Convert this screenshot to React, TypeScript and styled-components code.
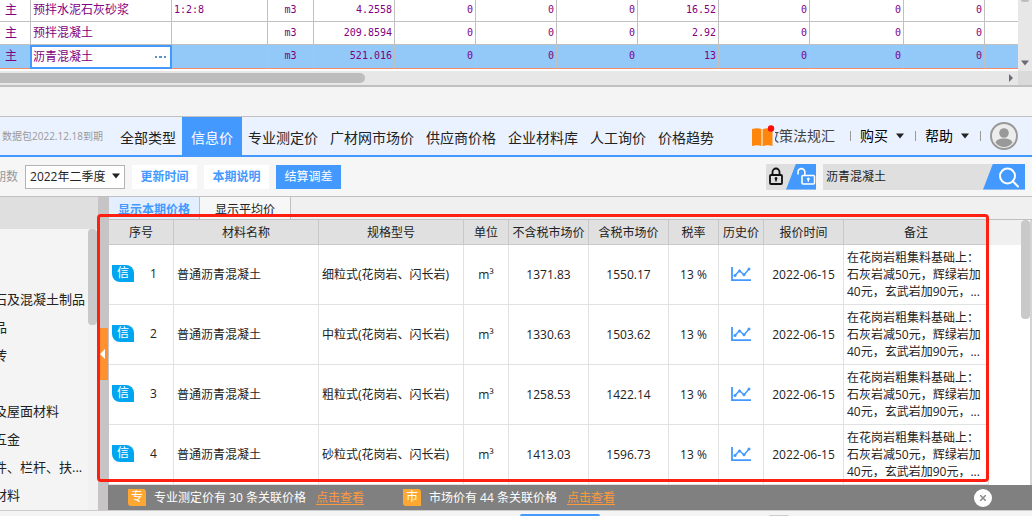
import React, { useState } from "react";
import styled, { createGlobalStyle } from "styled-components";

const SANS = '"Open Sans", "Noto Sans CJK SC", sans-serif';
const MONO = '"DejaVu Sans Mono", "Noto Sans CJK SC", monospace';
const BLUE = "#4499ff";
const LINE = "#c0c0c0";

const GlobalStyle = createGlobalStyle`
  * { box-sizing: border-box; }
  body { margin: 0; background: #f4f4f4; font-family: ${SANS}; font-size: 12px; line-height: 16px; color: #222; overflow: hidden; }
  button, input, select { font: inherit; color: inherit; margin: 0; padding: 0; border: 0; background: none; border-radius: 0; outline: none; }
  button { cursor: pointer; white-space: nowrap; }
  svg { display: block; flex: none; }
`;

const Page = styled.main`
  display: flex;
  flex-direction: column;
`;

/* ---------- upper resource grid ---------- */

const GridArea = styled.section`
  display: flex;
  height: 71px;
  background: #fff;
`;

const GridBody = styled.div`
  flex: 1;
  min-width: 0;
`;

const Grid = styled.table`
  width: 100%;
  table-layout: fixed;
  border-collapse: separate;
  border-spacing: 0;
  color: purple;
`;

const GridRow = styled.tr<{ $selected?: boolean }>`
  height: ${(p) => (p.$selected ? 24 : 23)}px;
  background: ${(p) => (p.$selected ? "#92c9f9" : "#fff")};
  &:first-child { height: 22px; }
  td { border-bottom: 1px solid ${(p) => (p.$selected ? "#f58b68" : LINE)}; }
`;

const GridCell = styled.td<{ $align?: string; $mono?: boolean }>`
  padding: 0 2px 1px;
  border-right: 1px solid ${LINE};
  text-align: ${(p) => p.$align || "left"};
  font-family: ${(p) => (p.$mono ? MONO : SANS)};
  font-size: ${(p) => (p.$mono ? 10 : 12)}px;
  line-height: 16px;
  white-space: nowrap;
`;

const EditCell = styled.td`
  padding: 0;
`;

const Editor = styled.div`
  display: flex;
  align-items: center;
  height: 24px;
  margin: -1px 0 -1px -1px;
  border: 2px solid ${BLUE};
  background: #fff;
  position: relative;
  input { flex: 1; min-width: 0; padding: 0 0 2px 1px; height: 18px; }
  button { padding-right: 4px; }
`;

const VScroll = styled.div`
  width: 14px;
  background: #e7e7e7;
  display: flex;
  flex-direction: column;
  justify-content: space-between;
  align-items: center;
  padding-bottom: 5px;
`;

const VScrollEnd = styled.div`
  width: 8px;
  height: 2px;
  background: #bdbdbd;
  border-radius: 0 0 4px 4px;
`;

const HScroll = styled.div`
  display: flex;
  height: 16px;
  border-bottom: 2px solid ${LINE};
  background: #e7e7e7;
`;

const HTrack = styled.div`
  flex: 1;
  display: flex;
  align-items: center;
  justify-content: space-between;
  padding-right: 5px;
`;

const HThumb = styled.div`
  width: 36%;
  height: 10px;
  background: #bdbdbd;
  border-radius: 0 5px 5px 0;
`;

const Corner = styled.div`
  width: 14px;
  background: #dadada;
`;

const Spacer = styled.div`
  height: 30px;
  border-bottom: 1px solid ${LINE};
`;

/* ---------- category navigation ---------- */

const NavBar = styled.header`
  display: flex;
  align-items: center;
  height: 40px;
  padding: 0 14px 0 2px;
  background: #ebf2ff;
  border-bottom: 2px solid ${BLUE};
`;

const PackInfo = styled.span`
  width: 112px;
  color: #999;
  font-size: 10px;
  white-space: nowrap;
`;

const Tabs = styled.nav`
  display: flex;
  height: 38px;
`;

const NavTab = styled.button<{ $active?: boolean }>`
  padding: 4px ${(p) => (p.$active ? 9 : 6)}px 0;
  font-size: 14px;
  line-height: 20px;
  color: ${(p) => (p.$active ? "#fff" : "#222")};
  background: ${(p) => (p.$active ? BLUE : "transparent")};
`;

const NavRight = styled.div`
  display: flex;
  align-items: center;
  margin-left: auto;
  font-size: 14px;
  line-height: 20px;
`;

const PolicyLink = styled.a`
  display: flex;
  align-items: center;
  margin-right: 15px;
  color: #444;
  text-decoration: none;
`;

const PolicyText = styled.span`
  display: flex;
  justify-content: flex-end;
  width: 60px;
  overflow: hidden;
  white-space: nowrap;
`;

const Divider = styled.i`
  width: 1px;
  height: 10px;
  margin-right: 9px;
  background: #999;
`;

const MenuButton = styled.button`
  display: flex;
  align-items: center;
  gap: 8px;
  margin-right: 11px;
  color: #000;
`;

/* ---------- toolbar ---------- */

const Toolbar = styled.section`
  display: flex;
  align-items: center;
  gap: 7px;
  height: 40px;
  padding-right: 7px;
  background: #f6f6f6;
  border-bottom: 1px solid ${LINE};
  overflow: hidden;
`;

const PeriodLabel = styled.label`
  margin-left: -6px;
  color: #999;
  white-space: nowrap;
`;

const PeriodSelect = styled.div`
  position: relative;
  width: 100px;
  select {
    width: 100%;
    height: 24px;
    padding-left: 4px;
    border: 1px solid #b4b4b4;
    background: #fff;
    appearance: none;
  }
  svg { position: absolute; right: 5px; top: 8px; pointer-events: none; }
`;

const ToolButton = styled.button<{ $primary?: boolean }>`
  width: 65px;
  height: 24px;
  color: ${(p) => (p.$primary ? "#fff" : BLUE)};
  background: ${(p) => (p.$primary ? BLUE : "#fff")};
  font-weight: ${(p) => (p.$primary ? 400 : 700)};
`;

const LockSwitch = styled.div`
  display: flex;
  width: 50px;
  height: 26px;
  margin-left: auto;
  background: #dfdfdf;
`;

const LockButton = styled.button`
  display: grid;
  place-items: center;
  width: 20px;
`;

const SlantButton = styled.button<{ $width: number }>`
  display: grid;
  align-items: center;
  justify-content: end;
  width: ${(p) => p.$width}px;
  height: 26px;
  background: ${BLUE};
  clip-path: polygon(10px 0, 100% 0, 100% 100%, 0 100%);
`;

const SearchForm = styled.form`
  display: flex;
  width: 202px;
  height: 26px;
  background: #dfdfdf;
  input { flex: 1; min-width: 0; padding-left: 3px; }
`;

/* ---------- workspace ---------- */

const Workspace = styled.section`
  position: relative;
  display: flex;
  border-bottom: 1px solid #ccc;
`;

const Sidebar = styled.aside`
  width: 98px;
  overflow: hidden;
`;

const SidebarHead = styled.div`
  height: 32px;
  background: #dfdfdf;
`;

const SidebarBody = styled.div`
  display: flex;
  height: 281px;
`;

const CategoryList = styled.ul`
  flex: 1;
  list-style: none;
  margin: 0 0 0 -6px;
  padding: 56px 0 0;
  overflow: hidden;
`;

const Category = styled.li<{ $gap?: boolean }>`
  margin-top: ${(p) => (p.$gap ? 28 : 0)}px;
  height: 28px;
  button { height: 28px; font-size: 13px; }
`;

const SidebarTrack = styled.div`
  width: 10px;
  background: #f1f1f1;
`;

const Thumb = styled.div<{ $height: number }>`
  width: 9px;
  height: ${(p) => p.$height}px;
  background: #c9c9c9;
  border-radius: 4px;
`;

const Splitter = styled.div`
  display: flex;
  flex-direction: column;
  align-items: flex-end;
  width: 10px;
  padding-top: 131px;
  background: #c6c4c4;
`;

const Collapse = styled.button`
  display: grid;
  place-items: center start;
  width: 8px;
  height: 52px;
  background: #ff9130;
`;

const Main = styled.div`
  flex: 1;
  min-width: 0;
`;

const PriceArea = styled.div`
  border-left: 1px solid #c6c4c4;
`;

const PriceTabs = styled.div`
  display: flex;
  height: 23px;
  background: #f0f0f0;
  border-bottom: 1px solid ${LINE};
`;

const PriceTab = styled.button<{ $active?: boolean }>`
  width: 91px;
  padding-top: 3px;
  border-right: 1px solid ${LINE};
  background: ${(p) => (p.$active ? "#e3efff" : "#f7f7f7")};
  color: ${(p) => (p.$active ? BLUE : "#222")};
  font-weight: ${(p) => (p.$active ? 700 : 400)};
`;

const TableRow = styled.div`
  display: flex;
  background: #fff;
`;

const PriceTable = styled.table`
  flex: 1;
  min-width: 0;
  width: 0;
  table-layout: fixed;
  border-collapse: separate;
  border-spacing: 0;
  th {
    height: 25px;
    padding: 2px 0 0;
    font-weight: 400;
    background: #e0e0e0;
    border-right: 1px solid #c8c8c8;
    border-bottom: 1px solid #c8c8c8;
    white-space: nowrap;
  }
`;

const Cell = styled.td<{ $center?: boolean }>`
  height: 60px;
  padding: 0 3px;
  border-right: 1px solid #e2e2e2;
  border-bottom: 1px solid #e2e2e2;
  text-align: ${(p) => (p.$center ? "center" : "left")};
  white-space: nowrap;
`;

const RemarkCell = styled(Cell)`
  line-height: 17px;
  white-space: pre-line;
`;

const IndexBox = styled.div`
  display: flex;
  align-items: center;
  gap: 16px;
  padding-bottom: 2px;
`;

const Badge = styled.span`
  width: 22px;
  height: 17px;
  background: #00a5f0;
  color: #fff;
  text-align: center;
  border-radius: 0 8px 0 8px;
`;

const HistoryButton = styled.button`
  display: block;
  margin: 0 auto;
  padding-bottom: 2px;
`;

const Gutter = styled.div`
  width: 32px;
  &::before { content: ""; display: block; height: 25px; background: #f0f0f0; }
`;

const PriceScroll = styled.div`
  width: 11px;
  border-right: 2px solid #d4d4d4;
`;

const RelatedBar = styled.div`
  display: flex;
  align-items: center;
  height: 25px;
  padding: 0 40px 0 20px;
  background: #808080;
  color: #fff;
`;

const Related = styled.div`
  display: flex;
  align-items: center;
  gap: 8px;
  margin-right: 39px;
  white-space: nowrap;
  a { margin-left: 2px; color: #ff9a3c; text-underline-offset: 2px; }
`;

const RelatedBadge = styled.span`
  width: 18px;
  height: 17px;
  background: #ffa733;
  text-align: center;
  border-radius: 0 3px 0 3px;
`;

const CloseButton = styled.button`
  display: grid;
  place-items: center;
  width: 18px;
  height: 18px;
  margin-left: auto;
  border-radius: 50%;
  background: #fff;
`;

const Highlight = styled.div`
  position: absolute;
  inset: 17px 43px 28px 97px;
  border: 3px solid #ff1f10;
  border-radius: 4px;
  pointer-events: none;
`;

const BottomStrip = styled.footer`
  display: flex;
  align-items: flex-end;
  height: 5px;
  padding-left: 520px;
  gap: 169px;
`;

const Peek = styled.div<{ $color: string; $width: number; $height: number }>`
  width: ${(p) => p.$width}px;
  height: ${(p) => p.$height}px;
  background: ${(p) => p.$color};
  border-radius: 2px 2px 0 0;
`;

/* ---------- icons ---------- */

const CaretDown = ({ color = "#222" }: { color?: string }) => (
  <svg width="8" height="6" viewBox="0 0 8 6"><path d="M0 0.5h8L4 5.5z" fill={color} /></svg>
);

const BookIcon = () => (
  <svg width="23" height="22" viewBox="0 0 23 22">
    <path d="M0 4c3-1 7-1 9.500 0v17c-2.500-1-6.500-1-9.500 0z" fill="#ff860d" />
    <path d="M11 4c2.500-1 6.500-1 9.500 0v17c-3-1-7-1-9.500 0z" fill="#ff860d" />
    <path d="M9.500 4h1.500v17H9.500z" fill="#ffc68c" />
    <circle cx="19" cy="3.500" r="3.200" fill="#ff0a0a" />
  </svg>
);

const AvatarIcon = () => (
  <svg width="28" height="28" viewBox="0 0 28 28">
    <circle cx="14" cy="14" r="13" fill="#ececec" stroke="#999" strokeWidth="2" />
    <circle cx="14" cy="11" r="4.800" fill="#999" />
    <path d="M5.500 20.500c1-3 4-4 8.500-4s7.500 1 8.500 4c-2 2.800-5 4.500-8.500 4.500s-6.500-1.700-8.500-4.500z" fill="#999" />
  </svg>
);

const LockIcon = () => (
  <svg width="16" height="20" viewBox="0 0 16 20" fill="none" stroke="#111">
    <rect x="2" y="8" width="12" height="9" rx="1" strokeWidth="1.800" />
    <path d="M4.500 8V5a3.500 3.500 0 0 1 7 0v3" strokeWidth="1.800" />
    <circle cx="8" cy="11.500" r="1" fill="#111" /><path d="M8 11.500v3" strokeWidth="1.400" />
  </svg>
);

const UnlockIcon = () => (
  <svg width="19" height="20" viewBox="0 0 19 20" fill="none" stroke="#fff">
    <rect x="5" y="8.500" width="12.500" height="8.500" rx="1" strokeWidth="1.600" />
    <path d="M1 7.500V5a3.400 3.400 0 0 1 6.800 0v3.500" strokeWidth="1.600" />
    <circle cx="11.300" cy="12" r="1" fill="#fff" /><path d="M11.300 12v2.800" strokeWidth="1.300" />
  </svg>
);

const SearchIcon = () => (
  <svg width="26" height="22" viewBox="0 0 26 22" fill="none" stroke="#fff" strokeWidth="2">
    <circle cx="8.500" cy="10" r="7.500" /><path d="M14 15.500l5 5" strokeLinecap="round" />
  </svg>
);

const ChartIcon = () => (
  <svg width="20" height="16" viewBox="0 0 20 16" fill="none" stroke={BLUE}>
    <path d="M1 1v13.200h19" strokeWidth="1.800" />
    <path d="M4 9.500l4.500-5 4.500 4.500 5-6" strokeWidth="1.500" />
    <g fill={BLUE} stroke="none">
      <circle cx="4" cy="9.500" r="1.500" /><circle cx="8.500" cy="5" r="1.500" />
      <circle cx="13" cy="8.800" r="1.500" /><circle cx="18" cy="3" r="1.500" />
    </g>
  </svg>
);

const DotsIcon = () => (
  <svg width="11" height="2" viewBox="0 0 11 2" fill="#5b93c4">
    <path d="M0 0h2v2H0zM4 0h3v2H4zM9 0h2v2H9z" />
  </svg>
);

/* ---------- data ---------- */

const gridWidths = [31, 141, 96, 46, 81, 81, 81, 81, 81, 91, 94, 81];
const gridRows = [
  { name: "预拌水泥石灰砂浆", spec: "1:2:8", qty: "4.2558", total: "16.52" },
  { name: "预拌混凝土", spec: "", qty: "209.8594", total: "2.92" },
  { name: "沥青混凝土", spec: "", qty: "521.016", total: "13" },
];

const navTabs = ["全部类型", "信息价", "专业测定价", "广材网市场价", "供应商价格", "企业材料库", "人工询价", "价格趋势"];

const categories = [
  { text: "石及混凝土制品" },
  { text: "品" },
  { text: "砖" },
  { text: "及屋面材料", gap: true },
  { text: "五金" },
  { text: "件、栏杆、扶..." },
  { text: "材料" },
];

const columns: [string, number | undefined][] = [
  ["序号", 65], ["材料名称", undefined], ["规格型号", undefined], ["单位", 45], ["不含税市场价", 80],
  ["含税市场价", 80], ["税率", 50], ["历史价", 45], ["报价时间", 80], ["备注", 145],
];

const prices = [
  { spec: "细粒式", net: "1371.83", gross: "1550.17" },
  { spec: "中粒式", net: "1330.63", gross: "1503.62" },
  { spec: "粗粒式", net: "1258.53", gross: "1422.14" },
  { spec: "砂粒式", net: "1413.03", gross: "1596.73" },
];

const remark = "在花岗岩粗集料基础上：\n石灰岩减50元，辉绿岩加\n40元，玄武岩加90元，...";

export default function App() {
  const [active, setActive] = useState("信息价");
  const [keyword, setKeyword] = useState("沥青混凝土");
  const [material, setMaterial] = useState("沥青混凝土");

  return (
    <Page>
      <GlobalStyle />
      <GridArea>
        <GridBody>
          <Grid>
            <colgroup>
              {gridWidths.map((w, i) => <col key={i} width={w} />)}
              <col />
            </colgroup>
            <tbody>
              {gridRows.map((row, i) => (
                <GridRow key={row.name} $selected={i === 2}>
                  <GridCell><span>&nbsp;主</span></GridCell>
                  {i === 2 ? (
                    <EditCell>
                      <Editor>
                        <input aria-label="名称" value={material} onChange={(e) => setMaterial(e.target.value)} />
                        <button aria-label="选择材料"><DotsIcon /></button>
                      </Editor>
                    </EditCell>
                  ) : (
                    <GridCell>{row.name}</GridCell>
                  )}
                  <GridCell $mono>{row.spec}</GridCell>
                  <GridCell $mono $align="center">m3</GridCell>
                  <GridCell $mono $align="right">{row.qty}</GridCell>
                  <GridCell $mono $align="right">0</GridCell>
                  <GridCell $mono $align="right">0</GridCell>
                  <GridCell $mono $align="right">0</GridCell>
                  <GridCell $mono $align="right">{row.total}</GridCell>
                  <GridCell $mono $align="right">0</GridCell>
                  <GridCell $mono $align="right">0</GridCell>
                  <GridCell $mono $align="right">0</GridCell>
                  <td />
                </GridRow>
              ))}
            </tbody>
          </Grid>
        </GridBody>
        <VScroll>
          <VScrollEnd />
          <CaretDown color="#6b6b75" />
        </VScroll>
      </GridArea>
      <HScroll>
        <HTrack>
          <HThumb />
          <svg width="4" height="8" viewBox="0 0 4 8"><path d="M0 0l4 4-4 4z" fill="#6b6b75" /></svg>
        </HTrack>
        <Corner />
      </HScroll>
      <Spacer />

      <NavBar>
        <PackInfo>数据包2022.12.18到期</PackInfo>
        <Tabs>
          {navTabs.map((t) => (
            <NavTab key={t} $active={t === active} onClick={() => setActive(t)}>{t}</NavTab>
          ))}
        </Tabs>
        <NavRight>
          <PolicyLink href="#policy"><BookIcon /><PolicyText>政策法规汇</PolicyText></PolicyLink>
          <Divider />
          <MenuButton>购买<CaretDown /></MenuButton>
          <Divider />
          <MenuButton>帮助<CaretDown /></MenuButton>
          <Divider />
          <button aria-label="账户"><AvatarIcon /></button>
        </NavRight>
      </NavBar>

      <Toolbar>
        <PeriodLabel htmlFor="period">期数</PeriodLabel>
        <PeriodSelect>
          <select id="period"><option>2022年二季度</option></select>
          <CaretDown />
        </PeriodSelect>
        <ToolButton>更新时间</ToolButton>
        <ToolButton>本期说明</ToolButton>
        <ToolButton $primary>结算调差</ToolButton>
        <LockSwitch>
          <LockButton aria-label="锁定"><LockIcon /></LockButton>
          <SlantButton $width={30} aria-label="解锁"><UnlockIcon /></SlantButton>
        </LockSwitch>
        <SearchForm onSubmit={(e) => e.preventDefault()}>
          <input aria-label="搜索材料" value={keyword} onChange={(e) => setKeyword(e.target.value)} />
          <SlantButton $width={42} aria-label="搜索"><SearchIcon /></SlantButton>
        </SearchForm>
      </Toolbar>

      <Workspace>
        <Sidebar>
          <SidebarHead />
          <SidebarBody>
            <CategoryList>
              {categories.map((c) => (
                <Category key={c.text} $gap={c.gap}><button>{c.text}</button></Category>
              ))}
            </CategoryList>
            <SidebarTrack><Thumb $height={96} /></SidebarTrack>
          </SidebarBody>
        </Sidebar>
        <Splitter>
          <Collapse aria-label="收起分类">
            <svg width="6" height="10" viewBox="0 0 6 10"><path d="M5 0v10L0 5z" fill="#fff" /></svg>
          </Collapse>
        </Splitter>
        <Main>
          <PriceArea>
            <PriceTabs>
              <PriceTab $active>显示本期价格</PriceTab>
              <PriceTab>显示平均价</PriceTab>
            </PriceTabs>
            <TableRow>
              <PriceTable>
                <colgroup>
                  {columns.map(([name, w]) => <col key={name} width={w} />)}
                </colgroup>
                <thead>
                  <tr>{columns.map(([name]) => <th key={name}>{name}</th>)}</tr>
                </thead>
                <tbody>
                  {prices.map((p, i) => (
                    <tr key={p.spec}>
                      <Cell><IndexBox><Badge>信</Badge>{i + 1}</IndexBox></Cell>
                      <Cell>普通沥青混凝土</Cell>
                      <Cell>{p.spec}(花岗岩、闪长岩)</Cell>
                      <Cell $center>m³</Cell>
                      <Cell $center>{p.net}</Cell>
                      <Cell $center>{p.gross}</Cell>
                      <Cell $center>13 %</Cell>
                      <Cell><HistoryButton aria-label="历史价"><ChartIcon /></HistoryButton></Cell>
                      <Cell $center>2022-06-15</Cell>
                      <RemarkCell>{remark}</RemarkCell>
                    </tr>
                  ))}
                </tbody>
              </PriceTable>
              <Gutter />
              <PriceScroll><Thumb $height={99} /></PriceScroll>
            </TableRow>
          </PriceArea>
          <RelatedBar>
            <Related>
              <RelatedBadge>专</RelatedBadge>
              <span>专业测定价有 30 条关联价格</span>
              <a href="#professional">点击查看</a>
            </Related>
            <Related>
              <RelatedBadge>市</RelatedBadge>
              <span>市场价有 44 条关联价格</span>
              <a href="#market">点击查看</a>
            </Related>
            <CloseButton aria-label="关闭">
              <svg width="6" height="6" viewBox="0 0 6 6" stroke="#888" strokeWidth="1.500"><path d="M0 0l6 6M6 0L0 6" /></svg>
            </CloseButton>
          </RelatedBar>
        </Main>
        <Highlight />
      </Workspace>
      <BottomStrip>
        <Peek $color={BLUE} $width={80} $height={2} />
        <Peek $color="#ccc" $width={20} $height={1} />
      </BottomStrip>
    </Page>
  );
}
